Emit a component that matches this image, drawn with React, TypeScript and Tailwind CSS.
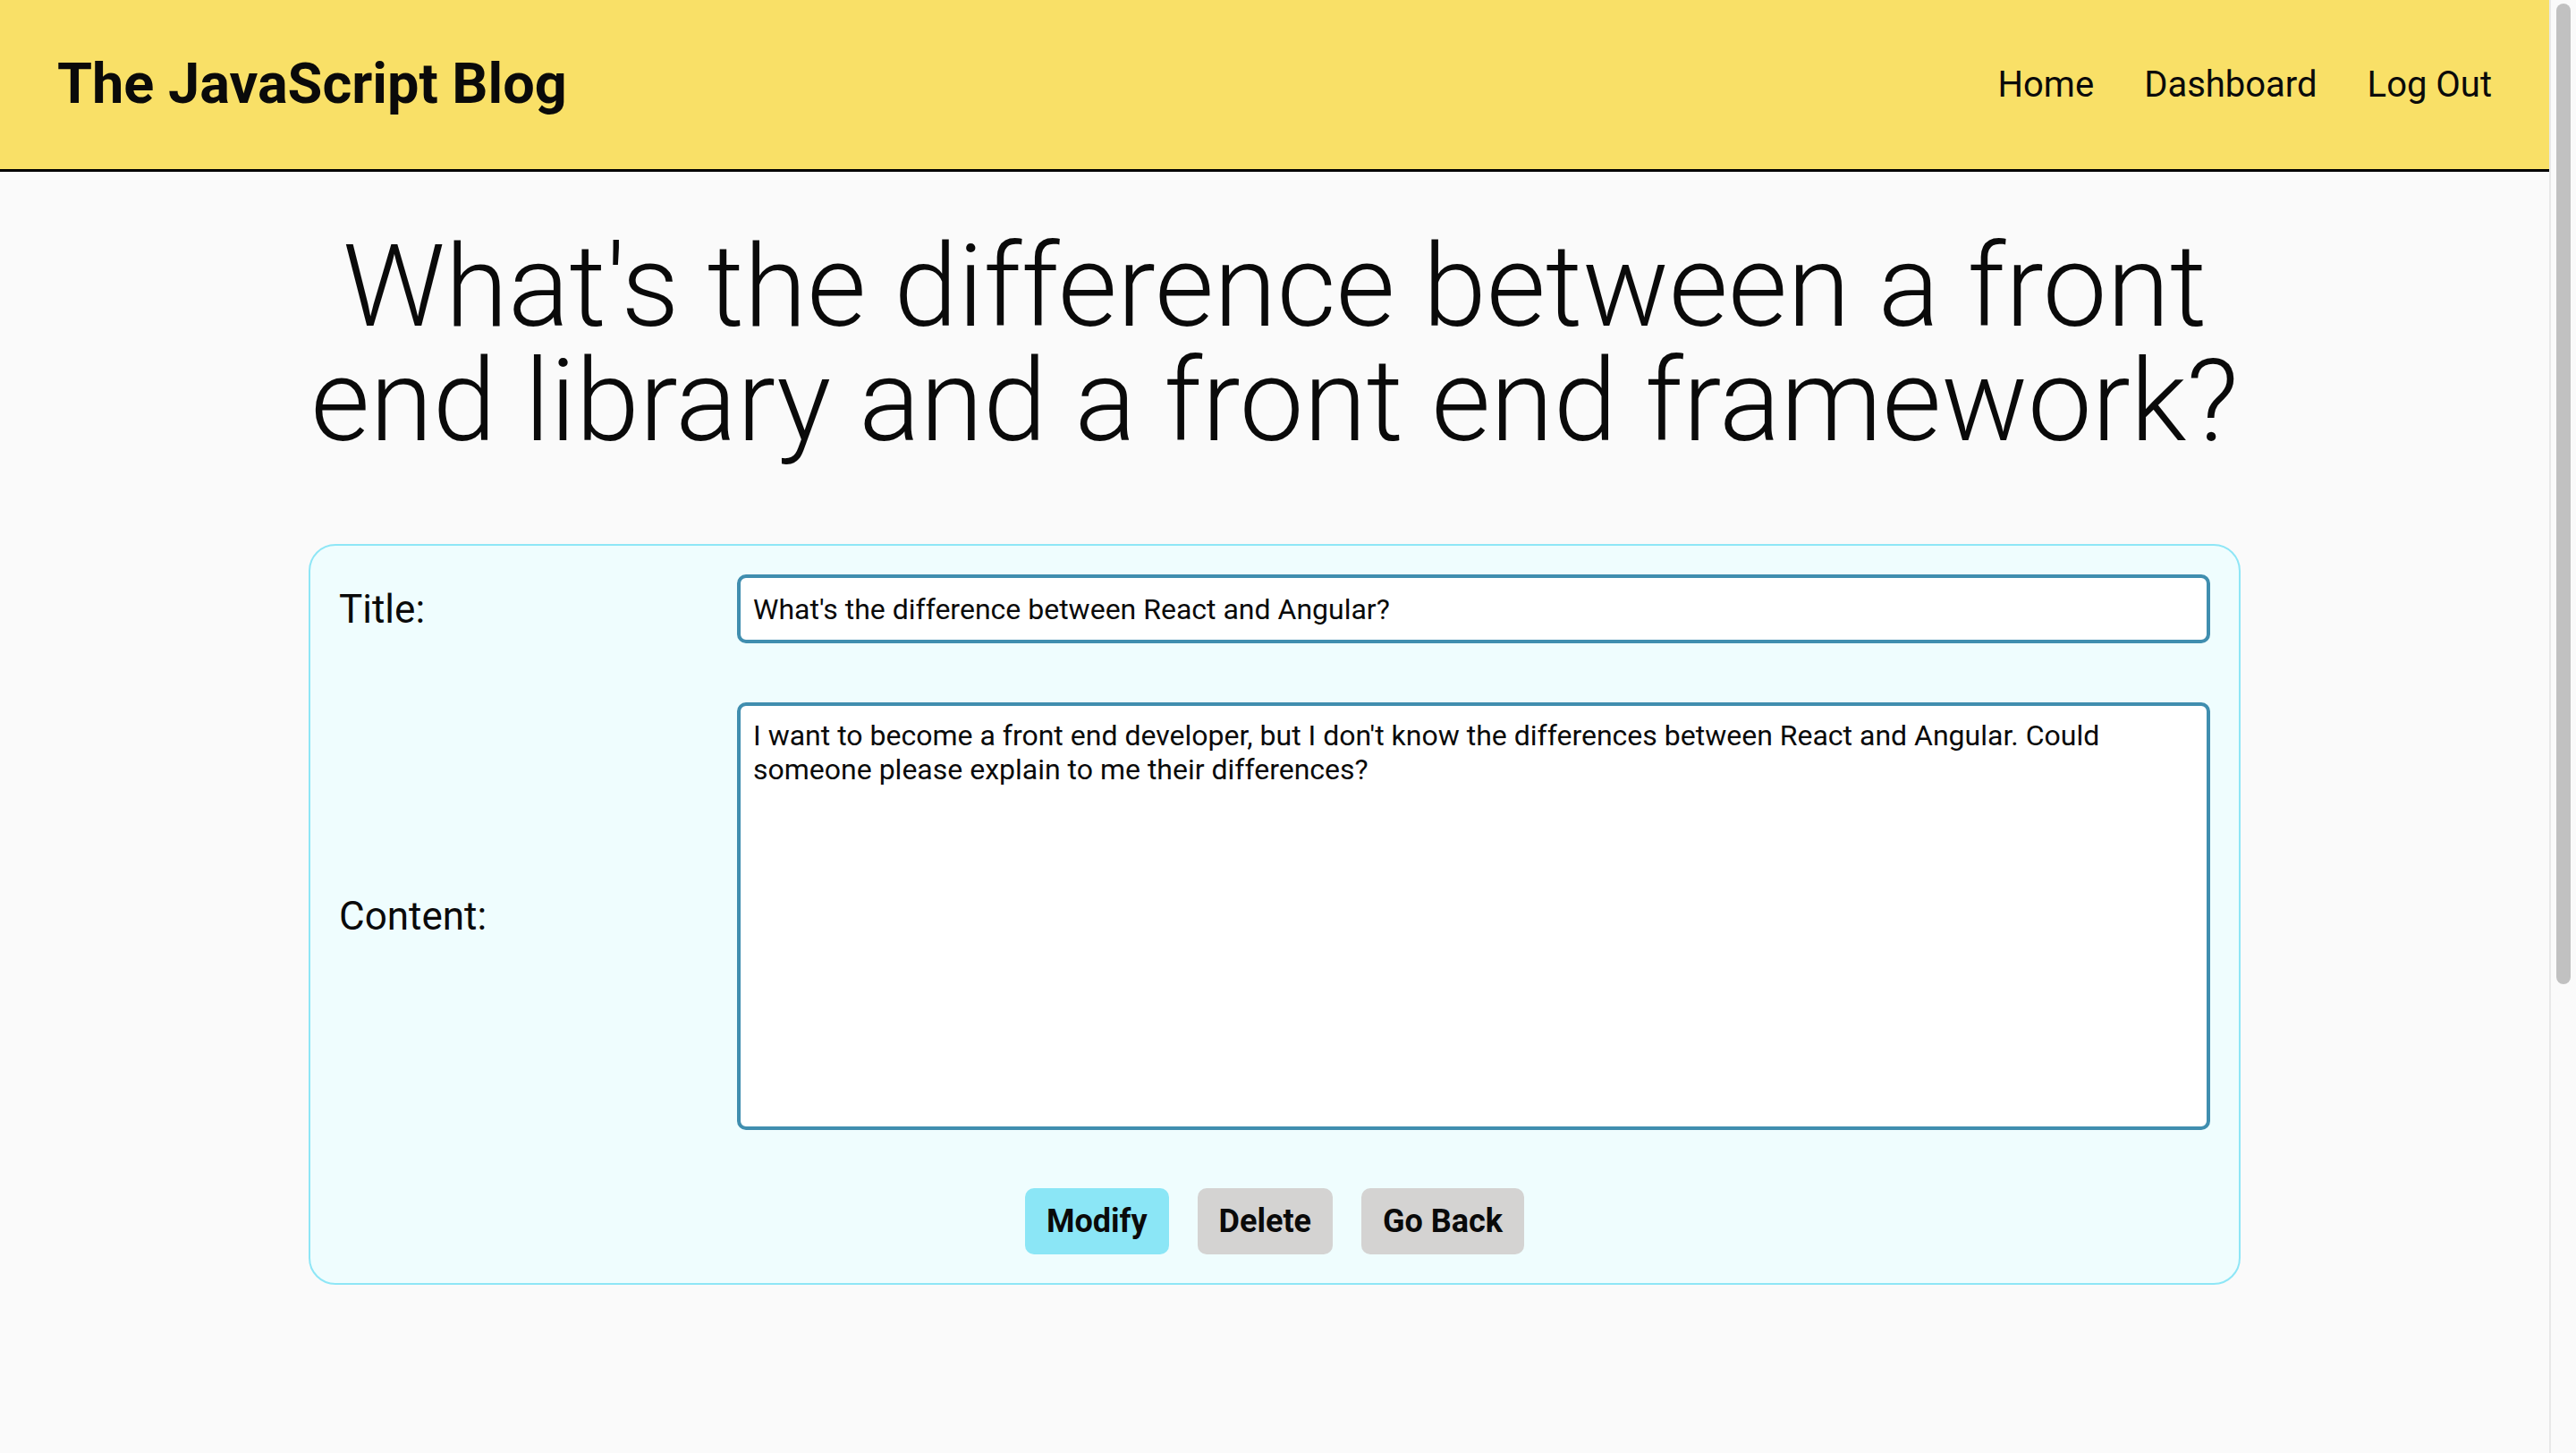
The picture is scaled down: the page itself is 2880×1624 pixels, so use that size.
import { useState } from 'react';

const navLinks = ['Home', 'Dashboard', 'Log Out'];

const roboto = { fontFamily: 'Roboto, "Liberation Sans", sans-serif' };

const App = () => {
  const [title, setTitle] = useState("What's the difference between React and Angular?");
  const [content, setContent] = useState(
    "I want to become a front end developer, but I don't know the differences between React and Angular. Could someone please explain to me their differences?"
  );

  return (
    <div className="flex h-[1624px] overflow-hidden bg-[#fafafa] text-[#0a0a0a] font-['Roboto',sans-serif]">
      <div className="flex-1 min-w-0">
        {/* ── Header ─────────────────────────────────────────────────────── */}
        <header className="flex h-[192px] items-center justify-between border-b-[3px] border-black bg-[#f9e067] px-[64px]">
          <h1 className="text-[63px] font-bold">The JavaScript Blog</h1>
          <nav className="flex items-center gap-[56px] text-[40px]">
            {navLinks.map((link) => (
              <a key={link} href="#" className="text-[#0a0a0a]">
                {link}
              </a>
            ))}
          </nav>
        </header>

        {/* ── Post ───────────────────────────────────────────────────────── */}
        <main className="flex flex-col items-center pt-[64px]">
          <h2 className="w-[2160px] text-center text-[128px] font-light leading-none">
            What's the difference between a front end library and a front end framework?
          </h2>

          <form
            className="mt-[96px] w-[2160px] rounded-[30px] border-2 border-[#8ee6f6] bg-[#effdfe] p-[32px]"
            onSubmit={(e) => e.preventDefault()}
          >
            <div className="grid grid-cols-[445px_1fr] items-center gap-y-[66px]">
              <label htmlFor="title" className="text-[44px]">
                Title:
              </label>
              <input
                id="title"
                value={title}
                onChange={(e) => setTitle(e.target.value)}
                className="h-[77px] rounded-[10px] border-4 border-[#408eaf] bg-white px-[14px] text-[32px] outline-none"
                style={roboto}
              />

              <label htmlFor="content" className="text-[44px]">
                Content:
              </label>
              <textarea
                id="content"
                value={content}
                onChange={(e) => setContent(e.target.value)}
                className="h-[478px] resize-none rounded-[10px] border-4 border-[#408eaf] bg-white px-[14px] py-[14px] text-[32px] leading-[38px] outline-none"
                style={roboto}
              />
            </div>

            <div className="mt-[65px] flex justify-center gap-[32px] text-[36px] font-bold">
              <button type="submit" className="h-[74px] rounded-[10px] bg-[#8be6f6] px-[24px]">
                Modify
              </button>
              <button type="button" className="h-[74px] rounded-[10px] bg-[#d4d3d2] px-[24px]">
                Delete
              </button>
              <button type="button" className="h-[74px] rounded-[10px] bg-[#d4d3d2] px-[24px]">
                Go Back
              </button>
            </div>
          </form>
        </main>
      </div>

      {/* fake scrollbar */}
      <div className="w-[30px] shrink-0 border-l-2 border-[#e8e8e8] bg-[#fafafa] pt-[4px]">
        <div className="mx-auto h-[1096px] w-[16px] rounded-full bg-[#c1c1c1]" />
      </div>
    </div>
  );
};

export default App;
